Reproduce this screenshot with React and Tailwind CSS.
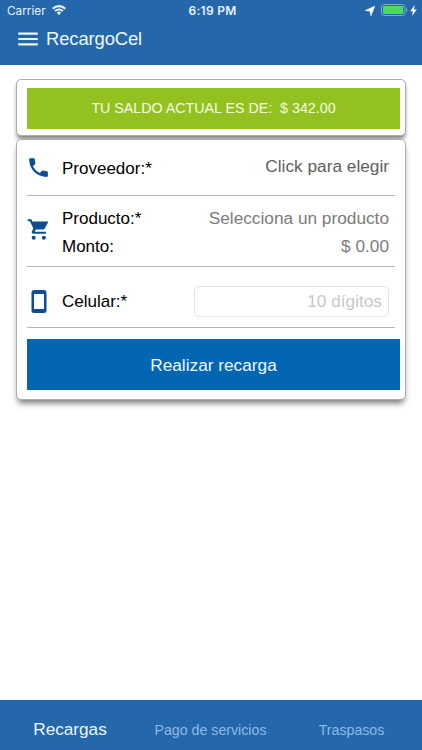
import React from 'react'
import { IoMdCall } from 'react-icons/io'
import { MdMenu } from 'react-icons/md'

const TABS = [
  { label: 'Recargas', className: 'w-[140px] text-[17.2px] leading-5 text-[#eef7ff]' },
  { label: 'Pago de servicios', className: 'w-[141px] text-[14.2px] leading-5 pt-[2px] text-[#8fb9e6]' },
  { label: 'Traspasos', className: 'w-[141px] text-[14.2px] leading-5 pt-[2px] text-[#8fb9e6]' },
]

function StatusBar() {
  return (
    <div className="flex h-[21px] items-center font-['Inter',sans-serif] text-[12px] leading-none text-[#e9f3ff]">
      <div className="flex w-[141px] items-center gap-[6px] pl-[7px]">
        <span className="pt-[2px] text-[11.8px]">Carrier</span>
        <svg className="h-[10px] w-[14px]" viewBox="0 0 14 10" fill="none" stroke="currentColor">
          <path d="M.8 3.7a8.8 8.8 0 0 1 12.4 0" strokeWidth="2.1" />
          <path d="M3.1 6.1a5.5 5.5 0 0 1 7.8 0" strokeWidth="2" />
          <path d="M7 10 4.8 7.7a3.1 3.1 0 0 1 4.4 0z" fill="currentColor" stroke="none" />
        </svg>
      </div>
      <div className="w-[143px] text-center font-semibold tracking-[0.3px]">6:19 PM</div>
      <div className="flex flex-1 items-center justify-end pr-[5px] text-white">
        <svg className="mr-[6px] h-[10px] w-[10px]" viewBox="0 0 10 10" fill="currentColor">
          <path d="M10 0 5.9 10 5 5.2 0 4.6z" stroke="currentColor" strokeWidth=".4" />
        </svg>
        <svg className="-mt-px h-[12px] w-[27px]" viewBox="0 0 27 12" fill="none">
          <rect x=".5" y=".5" width="23.4" height="11" rx="2.4" stroke="#7ea8d6" />
          <rect x="2" y="2" width="20.3" height="8" rx="1" fill="#4cd964" />
          <path d="M25 4c1.8.5 1.8 3.5 0 4z" fill="#7ea8d6" />
        </svg>
        <svg className="ml-[2px] h-[11px] w-[7px]" viewBox="0 0 7 11" fill="currentColor">
          <path d="M4.7 0 .2 6.2h2.7L2 11l4.8-6.4H4z" />
        </svg>
      </div>
    </div>
  )
}

function Header() {
  return (
    <header className="h-[65px] bg-[#2467ab]">
      <StatusBar />
      <div className="flex h-[35px] items-center pl-[15px]">
        <MdMenu className="h-[26px] w-[26px] text-[#e9f5ff]" />
        <h1 className="pl-[5px] text-[18.4px] leading-6 tracking-[-0.1px] text-[#eef7ff]">RecargoCel</h1>
      </div>
    </header>
  )
}

function CartIcon() {
  return (
    <svg className="-mt-[6px] h-[21px] w-[22px]" viewBox="0 0 22 21" fill="currentColor">
      <path d="M.7.2h3.700l1 2.200h15.200c.5 0 .7.4.5.800l-3.500 6.500c-.3.500-.8.800-1.400.8H8.700l-1 2.300h11.200v2H6.600c-1.500 0-2.400-1.300-1.700-2.500l1.500-2.700L2.900 2.200H.7z" />
      <circle cx="6.700" cy="18.700" r="2" />
      <circle cx="16.900" cy="18.700" r="2" />
    </svg>
  )
}

function MobileIcon() {
  return (
    <svg className="ml-[4px] h-[23px] w-[16px]" viewBox="0 0 16 23" fill="currentColor" fillRule="evenodd">
      <path d="M3 0h10a2.5 2.5 0 0 1 2.5 2.5v18A2.5 2.5 0 0 1 13 23H3a2.5 2.5 0 0 1-2.5-2.5v-18A2.5 2.5 0 0 1 3 0zM3 4v15h10V4z" />
    </svg>
  )
}

function Row({ icon, children, className }) {
  return (
    <div className={`mr-[5px] flex items-center border-b border-[#b4b4b4] ${className}`}>
      <div className="flex w-[35px] shrink-0 text-[#0b4f92]">{icon}</div>
      <div className="flex-1 pr-[6px]">{children}</div>
    </div>
  )
}

export default function App() {
  return (
    <div className="flex h-[750px] w-[422px] flex-col overflow-hidden bg-white font-['Liberation_Sans',Arial,sans-serif] text-[17px] text-black">
      <Header />

      <main className="flex-1 pt-[14px] pr-[16px] pl-[16px]">
        {/* Saldo */}
        <section className="h-[57px] rounded-[5px] border border-[#adadad] bg-white pt-[8px] pr-[5px] pl-[10px] shadow-[0_4px_4px_-1px_rgba(0,0,0,0.5)]">
          <div className="flex h-[41px] items-center justify-center bg-[#93c11f] text-[14.25px] whitespace-pre text-[#f6fbe4]">
            {'TU SALDO ACTUAL ES DE:  $ 342.00'}
          </div>
        </section>

        {/* Formulario de recarga */}
        <section className="relative mt-[3px] h-[261px] rounded-[5px] border border-[#adadad] bg-white pr-[5px] pl-[10px] shadow-[0_5px_6px_-2px_rgba(0,0,0,0.55)]">
          <Row className="h-[56px]" icon={<IoMdCall className="-ml-px h-[25px] w-[25px]" />}>
            <div className="flex justify-between leading-5">
              <span className="pt-[3px]">Proveedor:*</span>
              <span className="text-[17.25px] text-[#606060]">Click para elegir</span>
            </div>
          </Row>
          <Row className="h-[71px] pt-[2px]" icon={<CartIcon />}>
            <div className="flex h-[28px] justify-between leading-[28px]">
              <span className="pt-px">Producto:*</span>
              <span className="text-[17.25px] text-[#7c7c7c]">Selecciona un producto</span>
            </div>
            <div className="flex h-[28px] justify-between leading-[28px]">
              <span className="pt-px">Monto:</span>
              <span className="text-[17.25px] text-[#7c7c7c]">$ 0.00</span>
            </div>
          </Row>
          <Row className="h-[61px] pt-[9px]" icon={<MobileIcon />}>
            <div className="flex items-center justify-between">
              <span>Celular:*</span>
              <input
                className="h-[31px] w-[195px] rounded-[5px] border border-[#e4e4e4] px-[6px] text-right text-[17.25px] placeholder:text-[#c7c7cc]"
                placeholder="10 dígitos"
              />
            </div>
          </Row>
          <button className="mt-[11px] h-[51px] w-full bg-[#0265b1] pt-[2px] text-[17.25px] text-[#eef7ff]">
            Realizar recarga
          </button>
        </section>
      </main>

      <nav className="flex h-[50px] items-center bg-[#2467ab] pt-[8px] text-center">
        {TABS.map((tab) => (
          <div key={tab.label} className={tab.className}>
            {tab.label}
          </div>
        ))}
      </nav>
    </div>
  )
}
